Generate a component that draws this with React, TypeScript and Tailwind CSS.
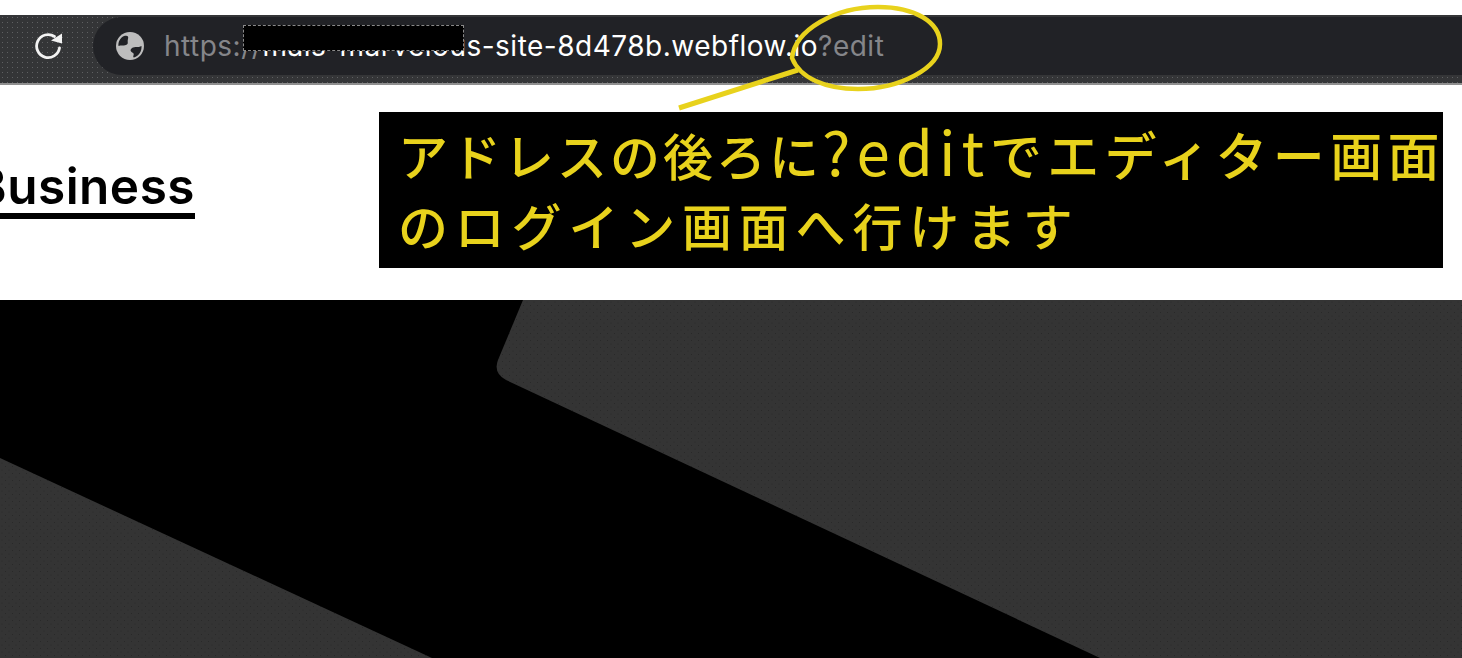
export default function App() {
  return (
    <div className="relative flex h-[658px] w-[1462px] flex-col overflow-hidden bg-white font-['Inter','Noto_Sans_CJK_JP',sans-serif]">
      <div className="h-[15px] shrink-0 bg-white" />
      <div className="flex h-[70px] shrink-0 items-start border-b-2 border-[#8f8f8f] bg-[#343537] bg-[radial-gradient(#5f6062_0.7px,transparent_0.8px)] bg-[length:5px_5px] pt-[2px]">
        <div className="flex h-[58px] w-[93px] shrink-0 items-center justify-center pl-[4px]">
          <svg width="32" height="32" viewBox="0 0 32 32" fill="none">
            <path d="M26.500 18A11.500 11.500 0 1 1 21.500 6.500" stroke="#f2f2f2" strokeWidth="2.8" strokeLinecap="round" />
            <path d="M18 10.500 L29 3.500 L29 13.500 Z" fill="#f2f2f2" />
          </svg>
        </div>
        <div className="flex h-[58px] flex-1 items-center rounded-l-[29px] bg-[#212226] pl-[22px]">
          <svg width="30" height="30" viewBox="0 0 30 30" className="shrink-0">
            <circle cx="15" cy="15" r="14" fill="#bdbdbd" />
            <path d="M9 5C12 4 14 5 13 8C12 11 14 13 11 14C8 15 6 14 3.500 15C3 11 5 7 9 5Z" fill="#212226" />
            <path d="M17 17C20 15 23 17 26.500 15C27 20 24 25 19 26.500C17 26 20 23 18 22C15 20 15 19 17 17Z" fill="#212226" />
          </svg>
          <div className="ml-[19px] whitespace-nowrap text-[28px] leading-none tracking-[0.5px] text-white">
            <span className="text-[#85868a]">https://</span>
            <span>mais-marvelous-site-8d478b.webflow.io</span>
            <span className="text-[#85868a]">?edit</span>
          </div>
        </div>
      </div>
      <div className="flex h-[215px] shrink-0 items-start overflow-hidden">
        <div className="ml-[-26px] mt-[75px] w-[405px] shrink-0">
          <span className="inline-block border-b-[6px] border-black font-['Inter',sans-serif] text-[49.5px] font-semibold leading-[53px] tracking-[0.5px] text-black">
            Business
          </span>
        </div>
        <div className="mt-[27px] h-[156px] w-[1064px] shrink-0 bg-black pl-[19px] pt-[6px] font-['Noto_Sans_CJK_JP',sans-serif] text-[50px] font-medium leading-[71px] text-[#e8d21c]">
          <div className="h-[71px] whitespace-nowrap">
            <span className="tracking-[3px]">アドレスの後ろに</span>
            <span className="text-[60px] font-normal leading-none tracking-[6px]">?edit</span>
            <span className="text-[52px] tracking-[5.3px]">でエディター画面</span>
          </div>
          <div className="whitespace-nowrap tracking-[6.8px]">のログイン画面へ行けます</div>
        </div>
      </div>
      <div className="relative flex-1 bg-black">
        <svg className="absolute inset-0" width="1462" height="358" viewBox="0 0 1462 358">
          <defs>
            <pattern id="dither" width="7" height="7" patternUnits="userSpaceOnUse">
              <rect width="7" height="7" fill="#343434" />
              <circle cx="2" cy="2" r="0.6" fill="#272727" />
              <circle cx="5.500" cy="5.500" r="0.6" fill="#272727" />
            </pattern>
          </defs>
          <path d="M523 0 L498 60 Q493 73 506 80 L1100 358 L1462 358 L1462 0 Z" fill="url(#dither)" />
          <path d="M0 158 L432 358 L0 358 Z" fill="url(#dither)" />
        </svg>
      </div>
      <svg className="pointer-events-none absolute left-0 top-0" width="1462" height="120" viewBox="0 0 1462 120" fill="none">
        <path d="M792 58C795 30 835 7 878 7C915 7 940 22 940 44C940 68 900 89 858 89C825 89 800 78 792 58Z" stroke="#e8d21c" strokeWidth="4.500" />
        <path d="M798 70L679 108" stroke="#e8d21c" strokeWidth="5" />
      </svg>
      <div className="absolute left-[243px] top-[25px] h-[26px] w-[221px] border border-dashed border-[#8a8a8a] bg-black" />
    </div>
  );
}
